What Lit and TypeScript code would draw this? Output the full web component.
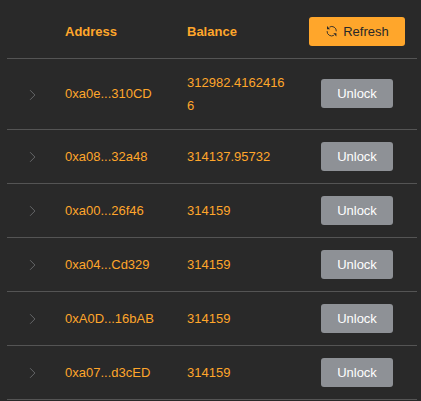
import { LitElement, html, css } from "lit";
import { customElement } from "lit/decorators.js";

interface Account {
  address: string;
  balance: string;
}

const accounts: Account[] = [
  { address: "0xa0e...310CD", balance: "312982.41624166" },
  { address: "0xa08...32a48", balance: "314137.95732" },
  { address: "0xa00...26f46", balance: "314159" },
  { address: "0xa04...Cd329", balance: "314159" },
  { address: "0xA0D...16bAB", balance: "314159" },
  { address: "0xa07...d3cED", balance: "314159" },
];

@customElement("app-root")
export class AppRoot extends LitElement {
  static styles = css`
    :host {
      display: block;
      box-sizing: border-box;
      height: 401px;
      overflow: hidden;
      padding: 4px 4px 0 7px;
      background: #292929;
      color: #ffa62b;
      font: 13px/23px "Liberation Sans", Arial, sans-serif;
    }
    .row {
      display: grid;
      grid-template-columns: 48px 122px 122px 116px;
      align-items: center;
      box-sizing: border-box;
      width: 410px;
      min-height: 54px;
      padding: 12px 0;
      border-bottom: 1px solid #545454;
    }
    .head {
      min-height: 55px;
      font-weight: bold;
    }
    .cell {
      padding: 0 10px;
      word-break: break-all;
    }
    .tall > :not(.balance) {
      padding-bottom: 1px;
    }
    .tall > .expand {
      padding: 1px 0 0 2px;
    }
    .expand {
      display: flex;
      justify-content: center;
      padding-left: 2px;
    }
    .action {
      display: flex;
      justify-content: center;
    }
    button {
      display: flex;
      align-items: center;
      justify-content: center;
      gap: 5px;
      width: 72px;
      height: 29px;
      padding: 0;
      border: 0;
      border-radius: 3px;
      background: #8e9196;
      color: #fff;
      font: 13px/13px "Liberation Sans", Arial, sans-serif;
    }
    .refresh {
      width: 96px;
      background: #ffa62b;
      color: #292929;
    }
    svg {
      display: block;
    }
    .arc {
      fill: none;
      stroke: currentColor;
      stroke-width: 0.9;
    }
    .tip {
      fill: currentColor;
    }
    .chevron {
      fill: none;
      stroke: #66686a;
      stroke-width: 0.95;
    }
  `;

  render() {
    return html`
      <div class="row head">
        <span></span>
        <div class="cell">Address</div>
        <div class="cell">Balance</div>
        <div class="action">
          <button class="refresh">
            <svg width="13" height="13" viewBox="0 0 13 13">
              <path class="arc" d="M4.5 2.1A4.5 4.5 0 0 1 11.3 6.3M8.9 10.3A4.5 4.5 0 0 1 2.1 6.1" />
              <path class="tip" d="M2 1V4.2H5.2L4.3 3.4L3 2ZM11.4 11.4V8.2H8.2L9.1 9L10.4 10.4Z" />
            </svg>
            Refresh
          </button>
        </div>
      </div>
      ${accounts.map(
        (a) => html`
          <div class="row ${a.balance.length > 14 ? "tall" : ""}">
            <div class="expand">
              <svg class="chevron" width="14" height="14" viewBox="0 0 14 14">
                <path d="M5.1 2.2L9.9 7L5.1 11.8" />
              </svg>
            </div>
            <div class="cell">${a.address}</div>
            <div class="cell balance">${a.balance}</div>
            <div class="action"><button>Unlock</button></div>
          </div>
        `,
      )}
    `;
  }
}
